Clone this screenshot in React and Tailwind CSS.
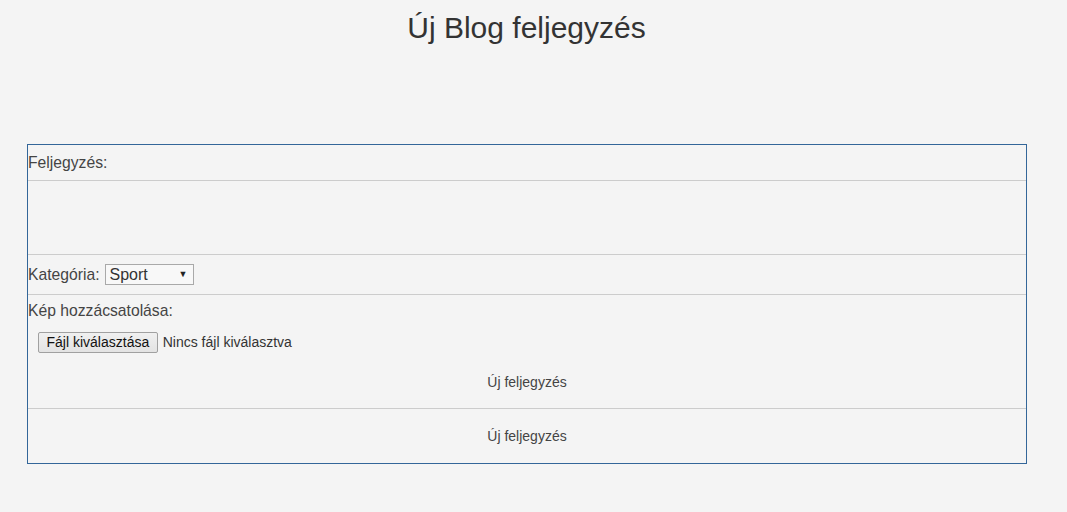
export default function App() {
  return (
    <div className="min-h-[512px] w-full bg-[#f4f4f4] text-[#333] font-['Liberation_Sans',Arial,sans-serif]">
      <h1 className="pr-[14px] pt-[8px] text-center text-[30px] leading-[40px] text-[#333]">Új Blog feljegyzés</h1>
      <div className="mx-[27px] mt-[96px] w-[1000px] border border-[#336699]">
        <div className="flex h-[36px] items-center border-b border-[#cccccc] text-[15.7px] text-[#444]">
          Feljegyzés:
        </div>
        <div className="h-[74px] border-b border-[#cccccc]"></div>
        <div className="flex h-[40px] items-center gap-[5px] border-b border-[#cccccc] text-[15.7px] text-[#444]">
          <span>Kategória:</span>
          <div className="flex h-[21px] w-[89px] items-center justify-between border border-[#a9a9a9] bg-[#f8f8f8] pl-[4px] pr-[5px] text-[16px] text-[#333]">
            <span>Sport</span>
            <span className="text-[9px] text-[#222]">▼</span>
          </div>
        </div>
        <div className="h-[114px] border-b border-[#cccccc] text-[15.7px] text-[#444]">
          <div className="pt-[6px] leading-[20px]">Kép hozzácsatolása:</div>
          <div className="mt-[11px] flex items-center pl-[10px] text-[14px]">
            <div className="flex h-[21px] items-center rounded-[2px] border border-[#a0a0a0] bg-gradient-to-b from-[#f0f0f0] to-[#e3e3e3] px-[7.5px] text-[#111]">
              Fájl kiválasztása
            </div>
            <span className="ml-[5px] text-[#333]">Nincs fájl kiválasztva</span>
          </div>
          <div className="mt-[19px] text-center text-[14px] text-[#444]">Új feljegyzés</div>
        </div>
        <div className="flex h-[54px] items-center justify-center text-[14px] text-[#444]">Új feljegyzés</div>
      </div>
    </div>
  );
}
